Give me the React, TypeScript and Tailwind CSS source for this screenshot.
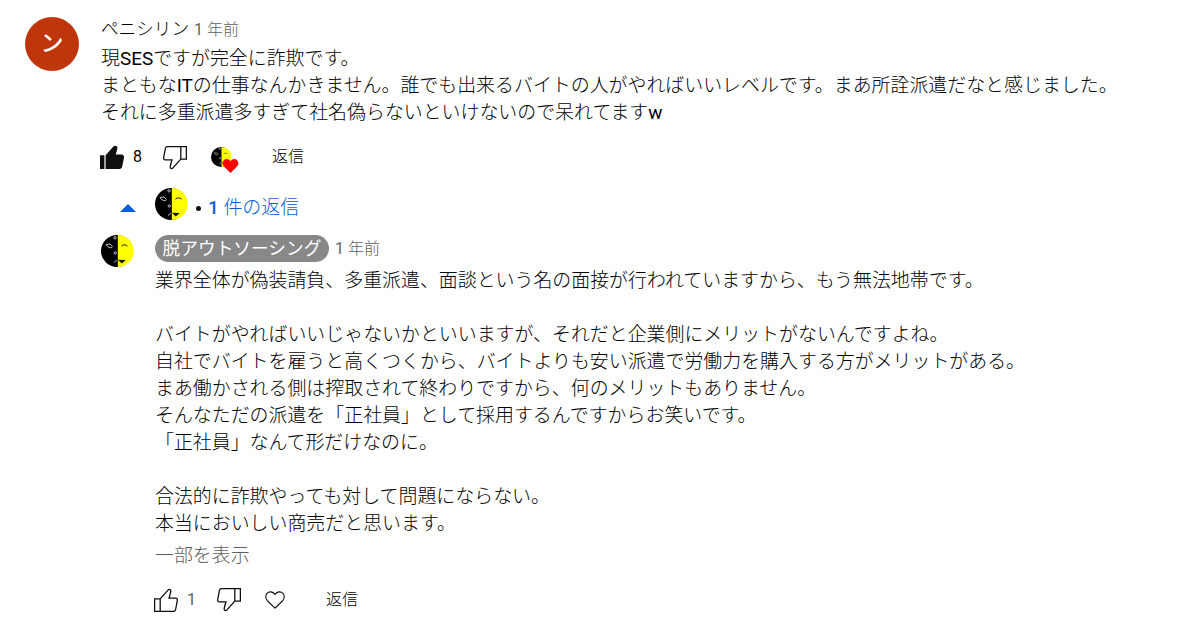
import type { ReactNode } from "react";

const comment = [
  "現SESですが完全に詐欺です。",
  "まともなITの仕事なんかきません。誰でも出来るバイトの人がやればいいレベルです。まあ所詮派遣だなと感じました。",
  "それに多重派遣多すぎて社名偽らないといけないので呆れてますw",
];

const reply = [
  "業界全体が偽装請負、多重派遣、面談という名の面接が行われていますから、もう無法地帯です。",
  "",
  "バイトがやればいいじゃないかといいますが、それだと企業側にメリットがないんですよね。",
  "自社でバイトを雇うと高くつくから、バイトよりも安い派遣で労働力を購入する方がメリットがある。",
  "まあ働かされる側は搾取されて終わりですから、何のメリットもありません。",
  "そんなただの派遣を「正社員」として採用するんですからお笑いです。",
  "「正社員」なんて形だけなのに。",
  "",
  "合法的に詐欺やっても対して問題にならない。",
  "本当においしい商売だと思います。",
];

// Latin runs are set a little heavier than the Japanese around them
function Mixed({ text }: { text: string }) {
  return text.split(/([A-Za-z0-9]+)/).map((part, i) =>
    i % 2 ? (
      <span key={i} className="font-normal">
        {part}
      </span>
    ) : (
      part
    ),
  );
}

function Lines({ lines }: { lines: string[] }) {
  return (
    <div className="text-[18.93px] leading-[27px] whitespace-nowrap">
      {lines.map((line, i) => (
        <p key={i} className="h-[27px]">
          <Mixed text={line} />
        </p>
      ))}
    </div>
  );
}

function FaceAvatar({ className }: { className: string }) {
  return (
    <svg viewBox="0 0 32 32" className={className}>
      <circle cx="16" cy="16" r="16" fill="#000" />
      <path d="M16.8 0A16 16 0 0 1 16.8 32Z" fill="#ff0" />
      <g fill="none" stroke="#bbb" strokeWidth="1">
        <path d="M5 9.5L9 9L11.5 11.5L10 13L6.5 11.5Z" />
        <circle cx="14" cy="2.8" r="1.2" />
        <circle cx="14.3" cy="18" r="1.2" />
        <path d="M13 27.5L16 25" />
      </g>
      <path d="M20.5 11.2C22 9.4 25 9.4 26.5 11.2" fill="none" stroke="#222" />
      <path d="M16.8 24.8L24.8 25L20.8 28.5Z" fill="#111" />
    </svg>
  );
}

function ThumbOutline({ className }: { className: string }) {
  return (
    <svg viewBox="0 0 24 24" className={className} fill="none" stroke="#0f0f0f" strokeWidth="1.3">
      <path d="M.6 10.9H6.2V23.4H.6ZM6.2 10.9L14 2.1C14.8 1.2 16.8 1.1 16.8 2.7C16.8 4.5 15.6 8.2 15 10.2H21.5C23 10.2 23.6 11.3 23.3 12.6L21.6 21.5C21.4 22.8 20.6 23.4 19.4 23.4H6.2" />
    </svg>
  );
}

function ThumbFilled({ className }: { className: string }) {
  return (
    <svg viewBox="0 0 24 24" className={className} fill="#0f0f0f">
      <path d="M0 10.3H4.4V24H0ZM5.6 10.3L13.6 1.3C15 0 17.5 .7 17.4 2.8C17.3 4.6 16.4 7.5 15.7 9.6H21.5C23.3 9.6 24.3 11.1 24 12.7L22.2 21.6C21.9 23.1 21 24 19.4 24H5.6Z" />
    </svg>
  );
}

function Heart({ className }: { className: string }) {
  return (
    <svg viewBox="0 0 20 18" className={className}>
      <path d="M10 17.2L2.6 10C.3 7.7.2 4.4 2 2.4C4.1.1 7.8.4 10 3.3C12.2.4 15.9.1 18 2.4C19.8 4.4 19.7 7.7 17.4 10Z" />
    </svg>
  );
}

function Count({ children }: { children: ReactNode }) {
  return <span className="ml-[9px] w-[30px] text-[16px] font-normal">{children}</span>;
}

function Age() {
  return (
    <span className="text-[16px] text-[#606060]">
      <Mixed text="1 年前" />
    </span>
  );
}

export default function App() {
  return (
    <main className="flex h-[634px] w-[1198px] overflow-hidden bg-white pl-[25px] font-['Roboto','Noto_Sans_CJK_JP',sans-serif] font-light text-black">
      <div className="mt-[17px] flex size-[54px] shrink-0 items-center justify-center rounded-full bg-[#bf360c] text-[23px] font-medium text-white">
        ン
      </div>
      <div className="ml-[22px] pt-4">
        <div className="flex h-[27px] items-center gap-[5px] text-[17.6px] whitespace-nowrap">
          <span className="-mt-px">ペニシリン</span>
          <Age />
        </div>
        <div className="mt-[2px]">
          <Lines lines={comment} />
        </div>

        <div className="mt-[14px] flex h-[34px] items-center">
          <ThumbFilled className="-ml-px size-6" />
          <Count>8</Count>
          <ThumbOutline className="mt-px size-6 rotate-180" />
          <div className="relative ml-[24px] h-6 w-[61px]">
            <FaceAvatar className="mt-[2px] size-5" />
            <Heart className="absolute top-[13px] left-[11px] h-[16px] w-[17px] fill-[#f00]" />
          </div>
          <span className="text-[16px]">返信</span>
        </div>

        <div className="mt-[15px] flex h-[34px] items-center text-[18.93px] text-[#065fd4]">
          <svg viewBox="0 0 16 8" className="mt-1 ml-[19px] h-2 w-4 fill-[#065fd4]">
            <path d="M0 8L8 0L16 8Z" />
          </svg>
          <FaceAvatar className="-mt-1 ml-[19px] size-8" />
          <span className="mt-1 ml-[9px] size-[5px] rounded-full bg-[#0f0f0f]" />
          <span className="mt-[5px] ml-[7px]">
            <b className="font-medium">1</b> 件の返信
          </span>
        </div>

        <div className="mt-[12px] flex">
          <FaceAvatar className="size-8 shrink-0" />
          <div className="ml-[22px]">
            <div className="flex h-[27px] items-center gap-[6px] whitespace-nowrap">
              <span className="flex h-[27px] w-[174px] items-center justify-center rounded-full bg-[#888] pt-px text-[17.7px] font-normal text-white">
                脱アウトソーシング
              </span>
              <Age />
            </div>
            <div className="mt-[5px]">
              <Lines lines={reply} />
            </div>
            <p className="mt-[5px] text-[18.93px] leading-[27px] text-[#606060]">一部を表示</p>
            <div className="mt-[14px] flex h-[34px] items-center">
              <ThumbOutline className="-ml-px size-6" />
              <Count>
                <span className="text-[#606060]">1</span>
              </Count>
              <ThumbOutline className="size-6 rotate-180" />
              <Heart className="ml-[24px] h-[18px] w-5 fill-none stroke-[#0f0f0f] stroke-[1.1]" />
              <span className="ml-[41px] text-[16px]">返信</span>
            </div>
          </div>
        </div>
      </div>
    </main>
  );
}
